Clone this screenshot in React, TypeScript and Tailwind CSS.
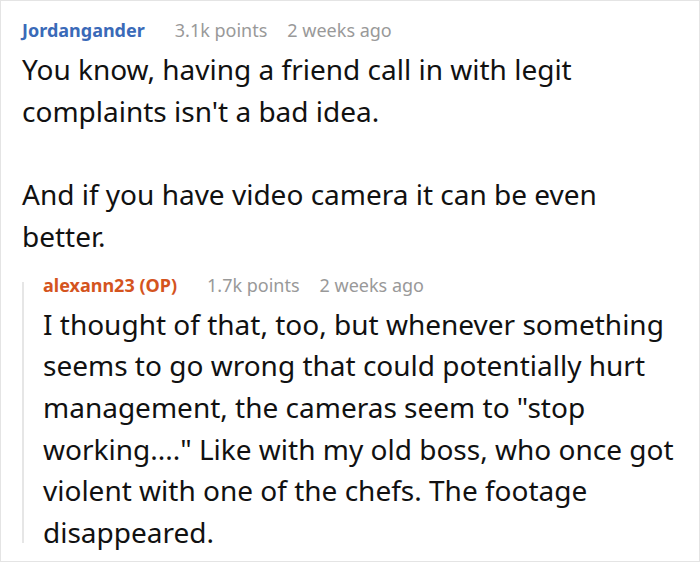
import React from 'react';

const font = { fontFamily: '"Noto Sans", "Open Sans", sans-serif' };

export default function App() {
  return (
    <div className="w-[700px] h-[562px] bg-white border border-[#e4e4e4] overflow-hidden" style={font}>
      <div className="pt-[17px] pl-[21px] pr-[18px]">
        {/* Parent comment */}
        <div className="flex items-center h-[24px] text-[18px]">
          <span className="font-bold text-[#3a6ab8]">Jordangander</span>
          <span className="ml-[30px] text-[#999999]">3.1k points</span>
          <span className="ml-[20px] text-[#999999]">2 weeks ago</span>
        </div>
        <div className="mt-[7px] text-[28px] leading-[41.7px] text-[#111111] pr-[60px]">
          <p>You know, having a friend call in with legit complaints isn't a bad idea.</p>
          <p className="mt-[41.7px]">And if you have video camera it can be even better.</p>
        </div>

        {/* Reply */}
        <div className="relative mt-[16px] pl-[21px]">
          <span className="absolute left-0 top-[8px] h-[261px] w-[2px] bg-[#e6e6e6]" />
          <div className="flex items-center h-[24px] text-[18px]">
            <span className="font-bold text-[#d4541e]">alexann23 (OP)</span>
            <span className="ml-[30px] text-[#999999]">1.7k points</span>
            <span className="ml-[20px] text-[#999999]">2 weeks ago</span>
          </div>
          <p className="mt-[6px] text-[28px] leading-[41.7px] text-[#111111]">
            I thought of that, too, but whenever something seems to go wrong that could potentially hurt management, the cameras seem to "stop working...." Like with my old boss, who once got violent with one of the chefs. The footage disappeared.
          </p>
        </div>
      </div>
    </div>
  );
}
